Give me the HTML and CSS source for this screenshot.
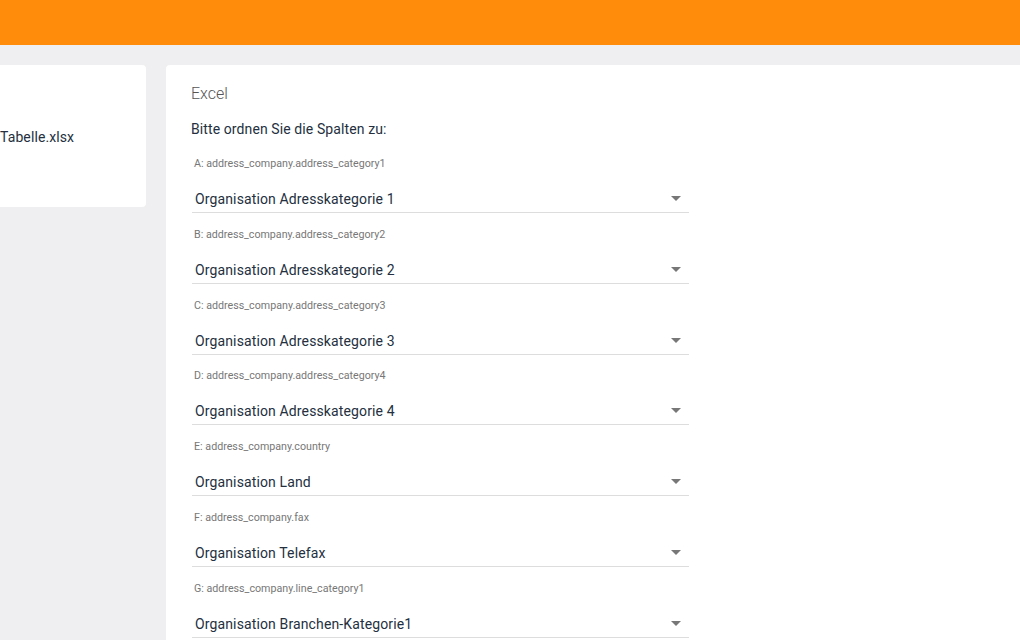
FILE: index.html
```html
<!DOCTYPE html>
<html lang="de">
<head>
    <meta charset="UTF-8">
    <meta name="viewport" content="width=device-width, initial-scale=1.0">
    <title>Excel Import</title>
    <link rel="stylesheet" href="styles.css">
</head>
<body>
    <header class="topbar"></header>

    <main class="layout">
        <!-- Datei -->
        <section class="card file-card">
            <div class="file-name">Tabelle.xlsx</div>
        </section>

        <!-- Spaltenzuordnung -->
        <section class="card mapping-card">
            <h2 class="card-title">Excel</h2>
            <p class="intro">Bitte ordnen Sie die Spalten zu:</p>

            <div class="field">
                <label class="field-label">A: address_company.address_category1</label>
                <div class="select"><span>Organisation Adresskategorie 1</span><i class="arrow"></i></div>
            </div>
            <div class="field">
                <label class="field-label">B: address_company.address_category2</label>
                <div class="select"><span>Organisation Adresskategorie 2</span><i class="arrow"></i></div>
            </div>
            <div class="field">
                <label class="field-label">C: address_company.address_category3</label>
                <div class="select"><span>Organisation Adresskategorie 3</span><i class="arrow"></i></div>
            </div>
            <div class="field">
                <label class="field-label">D: address_company.address_category4</label>
                <div class="select"><span>Organisation Adresskategorie 4</span><i class="arrow"></i></div>
            </div>
            <div class="field">
                <label class="field-label">E: address_company.country</label>
                <div class="select"><span>Organisation Land</span><i class="arrow"></i></div>
            </div>
            <div class="field">
                <label class="field-label">F: address_company.fax</label>
                <div class="select"><span>Organisation Telefax</span><i class="arrow"></i></div>
            </div>
            <div class="field">
                <label class="field-label">G: address_company.line_category1</label>
                <div class="select"><span>Organisation Branchen-Kategorie1</span><i class="arrow"></i></div>
            </div>
        </section>
    </main>
</body>
</html>
```

FILE: styles.css
```css
body {
    font-family: Roboto, 'Liberation Sans', sans-serif;
    margin: 0;
    padding: 0;
    background: #efeff1;
    color: #243040;
    overflow: hidden;
    height: 640px;
}

.topbar {
    height: 45px;
    background: #ff8d0b;
}

.layout {
    display: flex;
    align-items: flex-start;
    gap: 20px;
    padding-top: 20px;
    margin-left: -20px;
}

.card {
    background: #fff;
    border-radius: 4px;
    flex-shrink: 0;
}

.file-card {
    width: 166px;
    height: 142px;
    padding-left: 20px;
    box-sizing: border-box;
    display: flex;
    align-items: center;
}

.file-name {
    font-size: 14px;
    letter-spacing: 0.1px;
    white-space: nowrap;
    padding-top: 1px;
}

.mapping-card {
    width: 900px;
    height: 600px;
    padding: 19px 25px 0;
}

.card-title {
    margin: 0;
    font-size: 16px;
    font-weight: 300;
    line-height: 20px;
    color: #555;
}

.intro {
    margin: 15px 0 17px;
    font-size: 14px;
    letter-spacing: 0.1px;
    line-height: 20px;
}

.field {
    width: 497px;
    margin: 0 0 13.83px 1px;
}

.field-label {
    display: block;
    padding-left: 2px;
    font-size: 10.7px;
    line-height: 16px;
    color: #777;
}

.select {
    display: flex;
    justify-content: space-between;
    align-items: center;
    margin-top: 17px;
    padding: 0 8px 3px 3px;
    border-bottom: 1px solid #ddd;
    font-size: 14px;
    letter-spacing: 0.13px;
    line-height: 20px;
}

.arrow {
    width: 0;
    height: 0;
    border-left: 5px solid transparent;
    border-right: 5px solid transparent;
    border-top: 5px solid #777;
    margin-top: -1px;
}
```
